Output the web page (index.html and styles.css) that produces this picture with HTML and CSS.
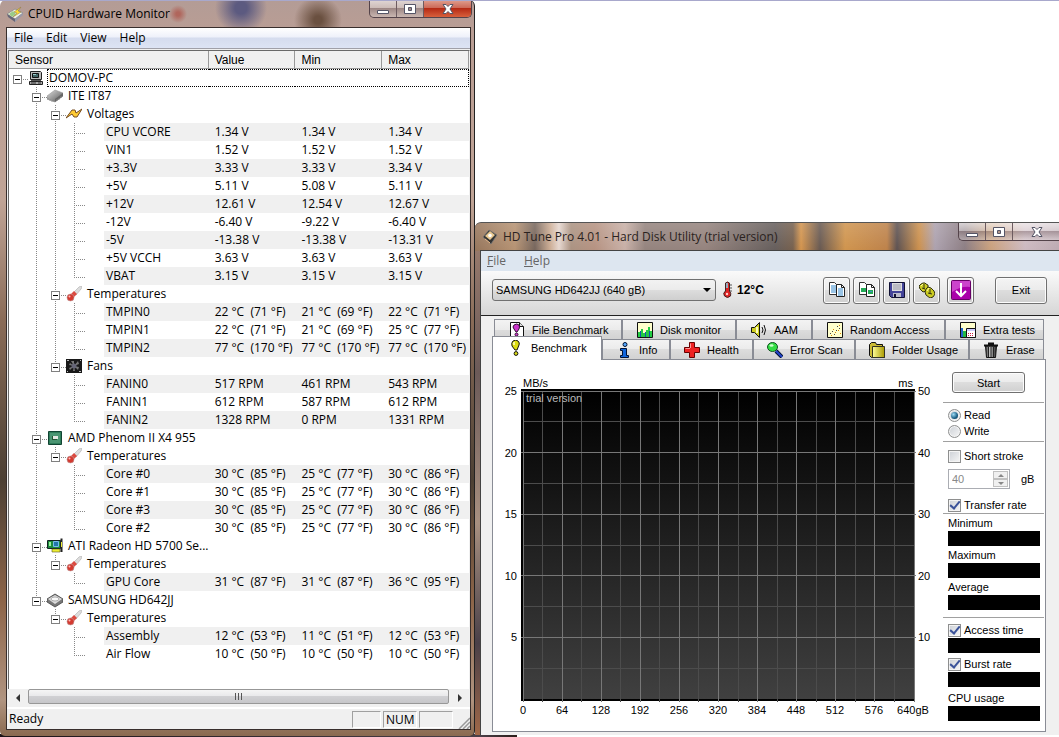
FILE: index.html
```
<!DOCTYPE html>
<html lang="en">
<head>
  <meta charset="UTF-8" />
  <meta name="viewport" content="width=device-width, initial-scale=1.0"/>
  <title>Hardware Monitor</title>
  <link rel="stylesheet" href="styles.css">
</head>
<body>
  <svg class="defs" aria-hidden="true">
    <linearGradient id="chipFill" x2="1" y2="1"><stop stop-color="#ddd"/><stop offset="1" stop-color="#555"/></linearGradient>
    <linearGradient id="yellowFill" x2="1"><stop stop-color="#ff9"/><stop offset="1" stop-color="#a90"/></linearGradient>
    <linearGradient id="binFill" x2="1"><stop stop-color="#333"/><stop offset=".4" stop-color="#ccc"/><stop offset="1" stop-color="#222"/></linearGradient>

    <symbol id="i-cpuid" viewBox="0 0 16 16">
      <path d="M0 8l8-5 8 4-8 6z" fill="#eef0e6" stroke="#888" stroke-width=".8"/>
      <path d="M0 8l8 5v3L1 11z" fill="#667"/>
      <path d="M8 13l8-6v2l-8 7z" fill="#99a"/>
      <path d="M2 8l4-3 3 3-4 3z" fill="#9c8"/>
      <path d="M14 1L7 6l3 1-4 4 8-5-3-1z" fill="#fd3" stroke="#874" stroke-width=".5"/>
    </symbol>
    <symbol id="i-pc" viewBox="0 0 16 16">
      <path d="M2.500 1.500h10l1 1v7h-11z" fill="#bbb" stroke="#222"/>
      <path d="M4.500 3.500h6v4h-6z" fill="#466" stroke="#111"/>
      <path d="M5 4h3v1H5z" fill="#9cc"/>
      <path d="M3 10h10v2H3z" fill="#555"/>
      <path d="M1.500 11.500h13v3h-13z" fill="#aaa" stroke="#222"/>
      <path d="M3 13h5M10 13h3" stroke="#333"/>
    </symbol>
    <symbol id="i-chip" viewBox="0 0 16 16">
      <path d="M0 8l8-6 8 3v3l-8 6-8-3z" fill="url(#chipFill)" stroke="#999" stroke-width=".6"/>
      <path d="M8 11l8-6v3l-8 6z" fill="#666"/>
      <path d="M1 10v2M3 11v2M5 12v2M7 12v2M10 11v2M12 10v2M14 8v2" stroke="#888" stroke-width=".8"/>
    </symbol>
    <symbol id="i-volt" viewBox="0 0 16 16">
      <path d="M0 12L6 4h3l1 3 6-4-5 8H8L6 8z" fill="#fc3" stroke="#754a20" stroke-width="1"/>
    </symbol>
    <symbol id="i-temp" viewBox="0 0 16 16">
      <path d="M7 7l6-6 2-1 1 1-1 2-5 6z" fill="#ddd" stroke="#bbb" stroke-width=".8"/>
      <path d="M4 9l4-4 3 3-4 4z" fill="#dc4a40"/>
      <circle cx="4.500" cy="11.500" r="3.500" fill="#d43a30" stroke="#b99" stroke-width=".6"/>
      <circle cx="3.500" cy="10.500" r="1" fill="#fbb"/>
    </symbol>
    <symbol id="i-fan" viewBox="0 0 16 16">
      <path d="M0 1h16v14H0z" fill="#181818"/>
      <path d="M8 8L5 3h3zM8 8l4-5 1 3zM8 8l5 1-1 3zM8 8l1 5H7zM8 8l-4 4-1-2zM8 8L3 7l1-2z" fill="#777"/>
      <circle cx="8" cy="8" r="2.500" fill="#667"/>
      <path d="M1 2h2v1H1zM14 2h1v1h-1zM1 13h1v1H1zM13 13h2v1h-2z" fill="#bbb"/>
    </symbol>
    <symbol id="i-cpu" viewBox="0 0 16 16">
      <path d="M1.500 1.500h13v13h-13z" fill="#2e7d5a" stroke="#143"/>
      <path d="M3 3h10v10H3z" fill="#4a9572"/>
      <path d="M5 6h5v4H5z" fill="#253"/>
      <path d="M6 6h5v3H6z" fill="#e4e8e4"/>
    </symbol>
    <symbol id="i-gpu" viewBox="0 0 16 16">
      <path d="M.500 2.500h13v8H.500z" fill="#1c8a3c" stroke="#122"/>
      <path d="M2 4h2v4H2z" fill="#9e9"/>
      <path d="M6.500 3.500h5v5h-5z" fill="#27a" stroke="#7be"/>
      <path d="M5 11h8v3H5z" fill="#ee3" stroke="#552" stroke-width=".6"/>
      <path d="M13.500 1.500h2M14.500 1v13" stroke="#222" stroke-width="2"/>
      <path d="M14.500 4v5" stroke="#ee3"/>
    </symbol>
    <symbol id="i-disk" viewBox="0 0 16 16">
      <path d="M0 7l8-5 8 5v3l-8 5-8-5z" fill="#777" stroke="#444" stroke-width=".8"/>
      <path d="M1 7l7-4 7 4-7 5z" fill="#ddd"/>
      <ellipse cx="8" cy="7" rx="4" ry="2" fill="#f8f8f8" stroke="#999" stroke-width=".8"/>
    </symbol>
    <symbol id="i-hdtune" viewBox="0 0 16 16">
      <path d="M1 8l6-7 8 5-6 9z" fill="#333" stroke="#777" stroke-width=".8"/>
      <path d="M3 7l5-5 5 4-5 5z" fill="#e8c890"/>
      <circle cx="8" cy="6.500" r="1.800" fill="#fff"/>
      <path d="M3 10l5 4" stroke="#eb8"/>
    </symbol>
    <symbol id="i-thermo" viewBox="0 0 12 18">
      <path d="M3.500 2q2-2 4 0v8q2 2 1 5-3 3-6 0-2-3 1-5z" fill="#d22" stroke="#422"/>
      <path d="M4 2h2v5H4z" fill="#9ab"/>
      <circle cx="5" cy="13" r="1.200" fill="#fcc"/>
      <path d="M8 4h2M8 7h2M8 10h2" stroke="#555"/>
    </symbol>
    <symbol id="i-bang" viewBox="0 0 16 16">
      <path d="M5 1q3-2 5 0 2 2 1 4L9 10H7L4 6Q3 3 5 1z" fill="#dd1" stroke="#111"/>
      <circle cx="8" cy="13.500" r="1.900" fill="#dd1" stroke="#111"/>
      <path d="M6 2v3" stroke="#ffc" stroke-width="1.500"/>
    </symbol>
    <symbol id="i-filebang" viewBox="0 0 16 16">
      <path d="M1.500.500h9l4 4v11h-13z" fill="#fff" stroke="#111"/>
      <path d="M10.500.500v4h4" fill="#ddd" stroke="#111"/>
      <path d="M5 3q3-2 5 0 1 2 0 4L8 10H7L5 7Q3 5 5 3z" fill="#c3c" stroke="#313"/>
      <circle cx="7.500" cy="12.500" r="1.500" fill="#c3c" stroke="#313"/>
    </symbol>
    <symbol id="i-monitor" viewBox="0 0 16 16">
      <path d="M.500.500h15v15H.500z" fill="#ffc" stroke="#111"/>
      <path d="M1 10h3V7h2v4h3V8h2V5h2v4h2v6H1z" fill="#2c4"/>
      <path d="M3 9h1v6H3zM8 10h1v5H8zM12 9h1v6h-1z" fill="#15a"/>
    </symbol>
    <symbol id="i-sound" viewBox="0 0 16 16">
      <path d="M.500 5.500h3l5-5v15l-5-5h-3z" fill="#cc2" stroke="#111"/>
      <path d="M6 5v6" stroke="#ffb" stroke-width="2"/>
      <path d="M11 5q2 3 0 6M13 3q3 5 0 10" fill="none" stroke="#111"/>
    </symbol>
    <symbol id="i-random" viewBox="0 0 16 16">
      <path d="M.500.500h15v15H.500z" fill="#ffc" stroke="#111"/>
      <path d="M3 11h1v1H3zM5 9h1v1H5zM7 12h1v1H7zM9 8h1v1H9zM10 4h1v1h-1zM12 6h1v1h-1z" fill="#444"/>
      <path d="M4 13h1v1H4zM6 7h1v1H6zM8 10h1v1H8zM11 8h1v1h-1zM13 11h1v1h-1zM12 3h1v1h-1z" fill="#d80"/>
    </symbol>
    <symbol id="i-extra" viewBox="0 0 16 16">
      <path d="M.500.500h15v15H.500z" fill="#ffc" stroke="#111"/>
      <path d="M1 6h2v9H1z" fill="#26c"/><path d="M3 9h3v6H3z" fill="#2b4"/>
      <path d="M6.500 6.500h9v9h-9z" fill="#fff" stroke="#111"/>
      <path d="M7 7h8v2H7z" fill="#ccf"/>
      <path d="M8 11h1v1H8zM10 11h1v1h-1zM12 11h1v1h-1zM8 13h1v1H8zM10 13h1v1h-1zM12 13h1v1h-1z" fill="#c24"/>
    </symbol>
    <symbol id="i-info" viewBox="0 0 16 16">
      <circle cx="9" cy="2.500" r="2" fill="#5af" stroke="#013"/>
      <path d="M4.500 6.500h6v7h2v2h-8v-2h2v-5h-2z" fill="#16d" stroke="#013"/>
    </symbol>
    <symbol id="i-health" viewBox="0 0 16 16">
      <path d="M5.500.500h5v5h5v5h-5v5h-5v-5h-5v-5h5z" fill="#e22" stroke="#600"/>
      <path d="M6.500 6V1.500M1.500 6.500H6" stroke="#f99"/>
    </symbol>
    <symbol id="i-scan" viewBox="0 0 16 16">
      <path d="M9 9l6 6" stroke="#013" stroke-width="4"/><path d="M9 9l6 6" stroke="#24c" stroke-width="2"/>
      <ellipse cx="5.500" cy="5" rx="5" ry="4.500" fill="#3d4" stroke="#152"/>
      <ellipse cx="4.500" cy="3.500" rx="2" ry="1.200" fill="#cfc"/>
    </symbol>
    <symbol id="i-folder" viewBox="0 0 16 16">
      <path d="M.500 2.500l2-2h4l1 2h6v3h2v10h-13l-2-2z" fill="#cb3" stroke="#111"/>
      <path d="M3.500 4.500h12v11h-12z" fill="url(#yellowFill)" stroke="#332"/>
    </symbol>
    <symbol id="i-bin" viewBox="0 0 16 16">
      <path d="M2.500 4h11l-1 11.500h-9z" fill="url(#binFill)" stroke="#111"/>
      <path d="M1 3.500h14M5 1.500h6" stroke="#111" stroke-width="2"/>
      <path d="M5.500 5v10M8 5v10M10.500 5v10" stroke="#222"/>
    </symbol>
    <symbol id="i-copy" viewBox="0 0 16 16">
      <path d="M.500.500h5l3 3v9h-8z" fill="#fff" stroke="#333"/>
      <path d="M2 4h5M2 6h5M2 8h5M2 10h5" stroke="#38c"/>
      <path d="M7.500 2.500h5l3 3v9h-8z" fill="#fff" stroke="#222"/>
      <path d="M12.500 2.500v3h3" fill="none" stroke="#222"/>
      <path d="M9 7h5M9 9h5M9 11h5M9 13h5" stroke="#38c"/>
    </symbol>
    <symbol id="i-copyimg" viewBox="0 0 16 16">
      <path d="M.500.500h5l3 3v9h-8z" fill="#fff" stroke="#333"/><path d="M2 6h5v4H2z" fill="#2a5"/>
      <path d="M7.500 2.500h5l3 3v9h-8z" fill="#fff" stroke="#222"/>
      <path d="M12.500 2.500v3h3" fill="none" stroke="#222"/>
      <path d="M9 8h5v4H9z" fill="#2a5"/><path d="M11 9h2v1h-2z" fill="#48c"/>
    </symbol>
    <symbol id="i-save" viewBox="0 0 16 16">
      <path d="M.500.500h15v15h-13l-2-2z" fill="#449" stroke="#113"/>
      <path d="M3 1h10v8H3z" fill="#ddd"/><path d="M4 3h8M4 5h8M4 7h8" stroke="#99a"/>
      <path d="M4 11h8v4H4z" fill="#bbc"/><path d="M5 12h2v3H5z" fill="#113"/>
    </symbol>
    <symbol id="i-options" viewBox="0 0 16 16">
      <g fill="#cc2" stroke="#331">
        <path d="M4 1h2l1 1 2 1v3L7 9l-3 1-3-3-1-3 2-2z"/>
        <path d="M9 5l3 1 3 3 1 3-2 3-3 1-4-3-1-3 1-3z"/>
      </g>
      <path d="M5 2v5M3 6l3 1M11 7v5M9 11l4 1" stroke="#331"/>
      <path d="M2 4l2-2M8 9l2-3" stroke="#ff9"/>
    </symbol>
    <symbol id="i-down" viewBox="0 0 20 20">
      <rect x=".500" y=".500" width="19" height="19" rx="1" fill="#a0a" stroke="#606"/>
      <path d="M1 1h18v6Q10 6 1 12z" fill="#c4c"/>
      <path d="M10 3v13M5 11l5 5 5-5" fill="none" stroke="#fff" stroke-width="2"/>
    </symbol>
    <symbol id="w-min" viewBox="0 0 14 12"><path d="M1.500 7.500h11v3h-11z" fill="#fff" stroke="#556"/></symbol>
    <symbol id="w-max" viewBox="0 0 14 12"><path d="M1.500 1.500h11v9h-11zM5.500 4.500h3v3h-3z" fill="#fff" stroke="#556" fill-rule="evenodd"/></symbol>
    <symbol id="w-close" viewBox="0 0 14 12"><path d="M2 1.500h3l2 2 2-2h3L9 6l3 4.500H9l-2-2-2 2H2L5 6z" fill="#fff" stroke="#556"/></symbol>
  </svg>

  <main class="desktop">
    <section class="window monitor">
      <header class="titlebar">
        <svg class="icon"><use href="#i-cpuid"/></svg>
        <h1>CPUID Hardware Monitor</h1>
        <div class="caption">
          <button aria-label="Minimize"><svg><use href="#w-min"/></svg></button>
          <button aria-label="Maximize"><svg><use href="#w-max"/></svg></button>
          <button class="close" aria-label="Close"><svg><use href="#w-close"/></svg></button>
        </div>
      </header>
      <div class="client">
        <nav class="menu">
          <button>File</button><button>Edit</button><button>View</button><button>Help</button>
        </nav>
        <div class="list">
          <table class="sensors">
            <colgroup><col class="name-col"><col><col><col></colgroup>
            <thead><tr><th>Sensor</th><th>Value</th><th>Min</th><th>Max</th></tr></thead>
            <tbody id="sensorRows"></tbody>
          </table>
        </div>
        <div class="scrollbar">
          <button class="arrow left" aria-label="Scroll left"></button>
          <div class="thumb"><i></i><i></i><i></i></div>
          <button class="arrow right" aria-label="Scroll right"></button>
        </div>
        <footer class="status">
          <span class="ready">Ready</span>
          <span class="pane"></span><span class="pane wide">NUM</span><span class="pane wide"></span>
          <svg class="grip" viewBox="0 0 12 12"><path d="M1 12L12 1M5 12l7-7M9 12l3-3" stroke="#999" stroke-width="1.500"/></svg>
        </footer>
      </div>
    </section>

    <section class="window tune">
      <header class="titlebar">
        <svg class="icon"><use href="#i-hdtune"/></svg>
        <h1>HD Tune Pro 4.01 - Hard Disk Utility (trial version)</h1>
        <div class="caption">
          <button aria-label="Minimize"><svg><use href="#w-min"/></svg></button>
          <button aria-label="Maximize"><svg><use href="#w-max"/></svg></button>
          <button class="close" aria-label="Close"><svg><use href="#w-close"/></svg></button>
        </div>
      </header>
      <div class="client">
        <nav class="menu">
          <button><u>F</u>ile</button><button><u>H</u>elp</button>
        </nav>
        <div class="toolbar">
          <select aria-label="Drive"><option>SAMSUNG HD642JJ (640 gB)</option></select>
          <svg class="thermo"><use href="#i-thermo"/></svg>
          <strong>12°C</strong>
          <div class="tools">
            <button class="push" aria-label="Copy text"><svg class="icon"><use href="#i-copy"/></svg></button>
            <button class="push" aria-label="Copy image"><svg class="icon"><use href="#i-copyimg"/></svg></button>
            <button class="push" aria-label="Save"><svg class="icon"><use href="#i-save"/></svg></button>
            <button class="push" aria-label="Options"><svg class="icon"><use href="#i-options"/></svg></button>
            <button class="push down" aria-label="Minimize to tray"><svg class="icon big"><use href="#i-down"/></svg></button>
          </div>
          <button class="push exit">Exit</button>
        </div>
        <div class="body">
          <div class="tabs back">
            <button><svg class="icon"><use href="#i-filebang"/></svg>File Benchmark</button>
            <button><svg class="icon"><use href="#i-monitor"/></svg>Disk monitor</button>
            <button><svg class="icon"><use href="#i-sound"/></svg>AAM</button>
            <button><svg class="icon"><use href="#i-random"/></svg>Random Access</button>
            <button><svg class="icon"><use href="#i-extra"/></svg>Extra tests</button>
          </div>
          <div class="tabs front">
            <button class="active"><svg class="icon"><use href="#i-bang"/></svg>Benchmark</button>
            <button><svg class="icon"><use href="#i-info"/></svg>Info</button>
            <button><svg class="icon"><use href="#i-health"/></svg>Health</button>
            <button><svg class="icon"><use href="#i-scan"/></svg>Error Scan</button>
            <button><svg class="icon"><use href="#i-folder"/></svg>Folder Usage</button>
            <button><svg class="icon"><use href="#i-bin"/></svg>Erase</button>
          </div>
          <div class="page">
            <div class="chart">
              <div class="units"><span>MB/s</span><span>ms</span></div>
              <div class="axis-y left"><span>25</span><span>20</span><span>15</span><span>10</span><span>5</span><span></span></div>
              <div class="plot">
                <svg viewBox="0 0 20 10" preserveAspectRatio="none">
                  <path class="minor" d="M1 0V10.100M3 0V10.100M5 0V10.100M7 0V10.100M9 0V10.100M11 0V10.100M13 0V10.100M15 0V10.100M17 0V10.100M19 0V10.100M0 1H20M0 3H20M0 5H20M0 7H20M0 9H20"/>
                  <path class="major" d="M0 0V10.100M2 0V10.100M4 0V10.100M6 0V10.100M8 0V10.100M10 0V10.100M12 0V10.100M14 0V10.100M16 0V10.100M18 0V10.100M20 0V10.100M-.100 0H20.100M-.100 2H20.100M-.100 4H20.100M-.100 6H20.100M-.100 8H20.100"/>
                </svg>
                <span class="trial">trial version</span>
              </div>
              <div class="axis-y right"><span>50</span><span>40</span><span>30</span><span>20</span><span>10</span><span></span></div>
              <div class="axis-x"><span>0</span><span>64</span><span>128</span><span>192</span><span>256</span><span>320</span><span>384</span><span>448</span><span>512</span><span>576</span><span>640gB</span></div>
            </div>
            <form class="side">
              <div class="group start"><button type="button" class="push">Start</button></div>
              <div class="group mode">
                <label><input type="radio" name="mode" checked>Read</label>
                <label><input type="radio" name="mode">Write</label>
              </div>
              <div class="group stroke">
                <label><input type="checkbox">Short stroke</label>
                <div class="size">
                  <div class="spinner">
                    <input type="text" value="40" id="strokeSize" disabled>
                    <div class="steps"><button type="button" aria-label="Up" disabled></button><button type="button" class="dn" aria-label="Down" disabled></button></div>
                  </div>
                  <label for="strokeSize">gB</label>
                </div>
                <label><input type="checkbox" checked>Transfer rate</label>
              </div>
              <div class="group stats">
                <p>Minimum</p><output></output>
                <p>Maximum</p><output></output>
                <p>Average</p><output></output>
              </div>
              <div class="group stats last">
                <label><input type="checkbox" checked>Access time</label><output></output>
                <label><input type="checkbox" checked>Burst rate</label><output></output>
                <p>CPU usage</p><output></output>
              </div>
            </form>
          </div>
        </div>
      </div>
    </section>
  </main>

  <script>
    const v = (name, value, min, max) => ({ name, values: [value, min, max] });

    const tree = { name: "DOMOV-PC", icon: "pc", children: [
      { name: "ITE IT87", icon: "chip", children: [
        { name: "Voltages", icon: "volt", children: [
          v("CPU VCORE", "1.34 V", "1.34 V", "1.34 V"),
          v("VIN1", "1.52 V", "1.52 V", "1.52 V"),
          v("+3.3V", "3.33 V", "3.33 V", "3.34 V"),
          v("+5V", "5.11 V", "5.08 V", "5.11 V"),
          v("+12V", "12.61 V", "12.54 V", "12.67 V"),
          v("-12V", "-6.40 V", "-9.22 V", "-6.40 V"),
          v("-5V", "-13.38 V", "-13.38 V", "-13.31 V"),
          v("+5V VCCH", "3.63 V", "3.63 V", "3.63 V"),
          v("VBAT", "3.15 V", "3.15 V", "3.15 V")
        ] },
        { name: "Temperatures", icon: "temp", children: [
          v("TMPIN0", "22 °C  (71 °F)", "21 °C  (69 °F)", "22 °C  (71 °F)"),
          v("TMPIN1", "22 °C  (71 °F)", "21 °C  (69 °F)", "25 °C  (77 °F)"),
          v("TMPIN2", "77 °C  (170 °F)", "77 °C  (170 °F)", "77 °C  (170 °F)")
        ] },
        { name: "Fans", icon: "fan", children: [
          v("FANIN0", "517 RPM", "461 RPM", "543 RPM"),
          v("FANIN1", "612 RPM", "587 RPM", "612 RPM"),
          v("FANIN2", "1328 RPM", "0 RPM", "1331 RPM")
        ] }
      ] },
      { name: "AMD Phenom II X4 955", icon: "cpu", children: [
        { name: "Temperatures", icon: "temp", children: [
          v("Core #0", "30 °C  (85 °F)", "25 °C  (77 °F)", "30 °C  (86 °F)"),
          v("Core #1", "30 °C  (85 °F)", "25 °C  (77 °F)", "30 °C  (86 °F)"),
          v("Core #3", "30 °C  (85 °F)", "25 °C  (77 °F)", "30 °C  (86 °F)"),
          v("Core #2", "30 °C  (85 °F)", "25 °C  (77 °F)", "30 °C  (86 °F)")
        ] }
      ] },
      { name: "ATI Radeon HD 5700 Se...", icon: "gpu", children: [
        { name: "Temperatures", icon: "temp", children: [
          v("GPU Core", "31 °C  (87 °F)", "31 °C  (87 °F)", "36 °C  (95 °F)")
        ] }
      ] },
      { name: "SAMSUNG HD642JJ", icon: "disk", children: [
        { name: "Temperatures", icon: "temp", children: [
          v("Assembly", "12 °C  (53 °F)", "11 °C  (51 °F)", "12 °C  (53 °F)"),
          v("Air Flow", "10 °C  (50 °F)", "10 °C  (50 °F)", "10 °C  (50 °F)")
        ] }
      ] }
    ] };

    const rows = [];

    // guides holds one class per indent level: pipe or empty
    function addRow(node, guides, isLast, index) {
      const root = guides.length === 0;
      const join = root ? "root" : isLast ? "corner" : "tee";
      const cls = root ? "focused" : node.values && index % 2 === 0 ? "striped" : "";
      const toggle = node.children ? "<button class='toggle' aria-label='Collapse'></button>" : "";
      const icon = node.icon ? `<svg class="icon"><use href="#i-${node.icon}"/></svg>` : "<span class='icon'></span>";
      const cells = (node.values || ["", "", ""]).map(t => `<td>${t}</td>`).join("");
      const lines = guides.map(g => `<span class="guide ${g}"></span>`).join("");
      rows.push(`<tr class="${cls}"><td class="name"><div class="node">${lines}<span class="guide ${join}">${toggle}</span>${icon}<span class="text">${node.name}</span></div></td>${cells}</tr>`);
      (node.children || []).forEach((child, i, all) => {
        addRow(child, guides.concat(isLast ? "empty" : "pipe"), i === all.length - 1, i);
      });
    }

    addRow(tree, [], true, 0);
    document.getElementById("sensorRows").innerHTML = rows.join("");
  </script>
</body>
</html>
```
FILE: styles.css
```
* {
  box-sizing: border-box;
}

body {
  margin: 0;
  background: #fff;
  color: #000;
  font-family: "Liberation Sans", Arial, sans-serif;
  font-size: 11px;
}

button, input, select {
  font: inherit;
  color: inherit;
  margin: 0;
  padding: 0;
}

h1, p {
  margin: 0;
}

.defs {
  position: absolute;
  width: 0;
  height: 0;
}

.desktop {
  display: grid;
  grid-template-columns: 475fr 584fr;
  min-height: 100vh;
  padding-bottom: 1px;
  overflow: hidden;
  border-top: 1px solid #a8a8cc;
  background: linear-gradient(90deg, #1c1418, #4a4048 480px, #2a1c18 517px, transparent 517px) bottom / 100% 3px no-repeat;
}

.icon {
  width: 16px;
  height: 16px;
  flex: none;
}

.window {
  display: flex;
  flex-direction: column;
  min-width: 0;
}

.titlebar {
  display: flex;
  align-items: center;
  gap: 5px;
  padding-left: 7px;
}

.titlebar h1 {
  flex: 1;
  font: 12px/16px "Open Sans", "Segoe UI", sans-serif;
  white-space: nowrap;
}

.caption {
  display: flex;
  align-self: flex-start;
  border: 1px solid #54434a;
  border-top: 0;
  border-radius: 0 0 5px 5px;
  overflow: hidden;
}

.caption button {
  display: flex;
  align-items: center;
  justify-content: center;
  width: 27px;
  height: 17px;
  border: 0;
  border-right: 1px solid #6d5b60;
  background: linear-gradient(#ffffff99, #ffffff55 45%, #7a686c66 50%, #ffffff44);
}

.caption svg {
  width: 14px;
  height: 12px;
}

.caption .close {
  width: 47px;
  border-right: 0;
}

.client {
  display: flex;
  flex-direction: column;
  flex: 1;
  background: #f0f0f0;
}

.menu {
  display: flex;
  align-items: center;
  font: 12px/16px "Open Sans", "Segoe UI", sans-serif;
}

.menu button {
  border: 0;
  background: none;
}

/* hardware monitor */

.monitor {
  margin-top: -1px;
  padding: 0 3px 6px 6px;
  border-right: 1px solid #222;
  border-radius: 6px 6px 5px 5px;
  background:
    radial-gradient(circle at 241px 8px, #5c5a80 6px, transparent 26px),
    radial-gradient(circle at 318px 20px, #6a5040 4px, transparent 24px),
    radial-gradient(circle at 178px 14px, #b0665c 2px, transparent 9px),
    linear-gradient(#b39c96, #b99d94 30px, #c0a496 200px, #8a6c58 320px, #4c4034 480px, #8c6448 600px, #b09480 700px, #8a6a50);
}

.monitor .titlebar {
  height: 27px;
  margin-left: -6px;
}

.monitor .caption {
  margin-right: -1px;
}

.monitor .close {
  background: linear-gradient(#e0a090, #cd6a58 45%, #b52a14 50%, #d8603c);
}

.monitor .client {
  border: 1px solid #382e2c;
}

.monitor .menu {
  height: 21px;
  gap: 13px;
  padding-left: 7px;
  background: linear-gradient(#fff, #eef1fa 45%, #d5dcee 50%, #dde4f4);
  border-bottom: 1px solid #a0a0a8;
}

.list {
  flex: 1;
  margin: 1px 0 0 1px;
  border: 1px solid #696969;
  border-bottom: 0;
  border-right-color: #f0f0f0;
  background: #fff;
}

.sensors {
  width: 100%;
  table-layout: fixed;
  border-collapse: separate;
  border-spacing: 0;
}

.name-col {
  width: 43.4%;
}

.sensors th {
  height: 18px;
  padding: 0 6px;
  background: #f0f0f0;
  border-right: 1px solid #999;
  border-bottom: 1px solid #999;
  font-size: 12px;
  font-weight: normal;
  text-align: left;
}

.sensors td {
  height: 18px;
  padding: 0 0 0 6px;
  font: 12px/16px "Open Sans", "Segoe UI", sans-serif;
  white-space: pre;
}

.sensors .name {
  padding: 0;
}

.node {
  display: flex;
  align-items: center;
  height: 18px;
}

.text {
  flex: 1;
  align-self: stretch;
  min-width: 0;
  margin-left: 3px;
  padding: 0 2px;
  line-height: 18px;
}

.striped td:not(.name), .striped .text {
  background: #f0f0f0;
}

.focused td:not(.name) {
  border-top: 1px dotted #000;
  border-bottom: 1px dotted #000;
}

.focused td:last-child {
  border-right: 1px dotted #000;
}

.focused .text {
  border: 1px dotted #000;
  border-right: 0;
  line-height: 16px;
  padding-left: 1px;
}

.guide {
  display: flex;
  flex: none;
  align-items: center;
  width: 19px;
  height: 18px;
  padding-left: 4px;
  background-repeat: no-repeat;
}

.pipe {
  background-image: repeating-linear-gradient(#888 0 1px, transparent 1px 2px);
  background-size: 1px 18px;
  background-position: 8px 0;
}

.tee {
  background-image: repeating-linear-gradient(#888 0 1px, transparent 1px 2px), repeating-linear-gradient(90deg, #888 0 1px, transparent 1px 2px);
  background-size: 1px 18px, 11px 1px;
  background-position: 8px 0, 8px 10px;
}

.corner {
  background-image: repeating-linear-gradient(#888 0 1px, transparent 1px 2px), repeating-linear-gradient(90deg, #888 0 1px, transparent 1px 2px);
  background-size: 1px 10px, 11px 1px;
  background-position: 8px 0, 8px 10px;
}

.root {
  background-image: repeating-linear-gradient(90deg, #888 0 1px, transparent 1px 2px);
  background-size: 11px 1px;
  background-position: 8px 10px;
}

.toggle {
  width: 9px;
  height: 9px;
  margin-top: 3px;
  border: 1px solid #808080;
  background: linear-gradient(#000, #000) center / 5px 1px no-repeat #fff;
}

.scrollbar {
  display: flex;
  gap: 2px;
  height: 18px;
  padding: 0 2px;
}

.arrow {
  display: flex;
  align-items: center;
  justify-content: center;
  width: 17px;
  border: 0;
  background: none;
}

.arrow::before {
  content: "";
  border: 4px solid transparent;
}

.arrow.left::before {
  border-right-color: #333;
  border-left-width: 0;
}

.arrow.right::before {
  border-left-color: #333;
  border-right-width: 0;
}

.thumb {
  display: flex;
  flex: 1;
  align-items: center;
  justify-content: center;
  gap: 2px;
  height: 15px;
  border: 1px solid #979797;
  border-radius: 2px;
  background: linear-gradient(#f5f5f5, #e9e9eb 45%, #d0d0d3 50%, #c6c6c9);
}

.thumb i {
  width: 1px;
  height: 7px;
  background: #555;
}

.status {
  display: flex;
  align-items: center;
  gap: 2px;
  height: 22px;
  border-top: 2px solid #fff;
  font: 12px/16px "Open Sans", "Segoe UI", sans-serif;
}

.ready {
  flex: 1;
  padding-left: 2px;
}

.pane {
  width: 29px;
  height: 17px;
  padding-left: 2px;
  border: 1px solid #a0a0a0;
  border-right-color: #fff;
  border-bottom-color: #fff;
  line-height: 15px;
}

.pane.wide {
  width: 34px;
}

.grip {
  align-self: flex-end;
  width: 12px;
  height: 12px;
  margin-left: 3px;
}

/* disk utility */

.tune {
  margin-top: 221px;
  align-self: start;
  padding-left: 5px;
  border-top: 1px solid #555;
  border-top-left-radius: 6px;
  background:
    linear-gradient(#ffffff33, #ffffff11) top / 100% 28px no-repeat,
    linear-gradient(90deg, #8f6c50, #b08a68 40px, #6c5a50 60px, #c8a68c 75px, #e4d4cc 84px, #a48a78 96px, #b08a78 120px, #c4aaa0 150px, #8c7a74 170px, #8d7a74 230px, #5a5250 300px, #6c5440 318px, #d08c40 326px, #5c4c44 345px, #cc8c40 370px, #b8783c 412px, #504444 422px, #c88840 444px, #a69aa8 460px, #84747a 490px, #c69a74 516px, #c9b4bc 550px, #b8a4ac) top / 100% 28px no-repeat,
    linear-gradient(#a08070, #6c5a58 150px, #a89080 300px, #4a4048 420px, #a06848);
}

.tune .titlebar {
  height: 27px;
  margin-left: -5px;
}

.tune .titlebar h1 {
  color: #2a2220;
}

.tune .close {
  width: 48px;
}

.tune .caption {
  border-radius: 0 0 0 5px;
  border-right: 0;
  margin-right: -2px;
}

.tune .client {
  border-left: 1px solid #444;
  border-top: 1px solid #444;
}

.tune .menu {
  height: 20px;
  gap: 18px;
  padding-left: 6px;
  background: #dde6f0;
  color: #666;
}

.toolbar {
  display: flex;
  align-items: center;
  height: 45px;
  padding: 0 12px 6px 11px;
  background: linear-gradient(#fafafa, #d6d6d6);
  border-bottom: 1px solid #222;
}

.toolbar select {
  flex: 0 1 224px;
  height: 22px;
  padding: 0 3px;
  appearance: none;
  border: 1px solid #707070;
  border-radius: 3px;
  background:
    url("data:image/svg+xml,%3Csvg xmlns='http://www.w3.org/2000/svg' width='8' height='4'%3E%3Cpath d='M0 0h8L4 4z'/%3E%3C/svg%3E") right 4px center no-repeat,
    linear-gradient(#f2f2f2, #ebebeb 50%, #ddd 50%, #cfcfcf);
}

.thermo {
  width: 12px;
  height: 18px;
  margin: 0 3px 0 6px;
}

.toolbar strong {
  font-size: 12px;
}

.tools {
  display: flex;
  gap: 3px;
  margin-left: auto;
}

.push {
  display: flex;
  align-items: center;
  justify-content: center;
  border: 1px solid #707070;
  border-radius: 3px;
  background: linear-gradient(#f4f4f4, #ebebeb 50%, #ddd 50%, #d0d0d0);
  box-shadow: inset 0 0 0 1px #fcfcfc;
}

.tools .push {
  width: 27px;
  height: 27px;
}

.tools .down {
  margin-left: 4px;
}

.icon.big {
  width: 20px;
  height: 20px;
}

.exit {
  width: 52px;
  height: 27px;
  margin-left: 21px;
}

.body {
  padding: 3px 13px 3px 11px;
}

.tabs {
  display: grid;
  margin: 0 2px;
}

.tabs button {
  display: flex;
  align-items: center;
  gap: 7px;
  height: 20px;
  padding-left: 14px;
  border: 1px solid #898c95;
  border-bottom: 0;
  background: linear-gradient(#f3f3f3, #ebebeb 50%, #ddd 50%, #d2d2d2);
  white-space: nowrap;
}

.tabs.back {
  grid-template-columns: 128fr 114fr 76fr 133fr 99fr;
}

.tabs.front {
  grid-template-columns: 110fr 68fr 83fr 102fr 114fr 75fr;
  margin-left: 0;
}

.tabs.front button {
  padding-left: 13px;
}

.tabs .active {
  z-index: 1;
  height: 24px;
  margin: -3px 0 -1px;
  padding-bottom: 2px;
  background: #fff;
}

.tabs.front .active {
  padding-left: 15px;
}

.page {
  display: flex;
  border: 1px solid #898c95;
  background: #fff;
}

.chart {
  display: grid;
  flex: 1;
  grid-template: 29px 1fr 30px / 28px 1fr 28px;
}

.units {
  grid-column: 2;
  display: flex;
  align-items: flex-end;
  justify-content: space-between;
  padding: 0 2px;
}

.axis-y {
  grid-row: 2;
  display: flex;
  flex-direction: column;
  justify-content: space-between;
  padding: 2px 0;
}

.axis-y span {
  height: 0;
  line-height: 0;
}

.axis-y.left {
  grid-column: 1;
  padding-right: 4px;
  text-align: right;
}

.axis-y.right {
  grid-column: 3;
  padding-left: 3px;
}

.plot {
  grid-area: 2 / 2;
  position: relative;
  border: 2px solid #000;
  border-right-width: 1px;
  background: linear-gradient(#000, #404040);
}

.plot svg {
  display: block;
  width: 100%;
  height: 100%;
  position: absolute;
  overflow: visible;
}

.plot path {
  fill: none;
  vector-effect: non-scaling-stroke;
  shape-rendering: crispEdges;
}

.minor {
  stroke: #4c4c4c;
}

.major {
  stroke: #777;
}

.trial {
  position: absolute;
  left: 3px;
  top: 1px;
  color: #bbb;
}

.axis-x {
  grid-area: 3 / 2;
  display: flex;
  justify-content: space-between;
  padding: 3px 2px 0;
}

.axis-x span {
  display: flex;
  justify-content: center;
  width: 0;
}

.side {
  flex: none;
  width: 102px;
}

.group {
  display: flex;
  flex-direction: column;
  margin-right: 1px;
  padding: 0 4px 0 5px;
  border-bottom: 1px solid #a0a0a0;
}

.group label {
  display: flex;
  align-items: center;
  gap: 3px;
  height: 16px;
  white-space: nowrap;
}

.start {
  padding: 12px 19px 9px 9px;
}

.start .push {
  height: 21px;
}

.mode {
  padding-top: 4px;
  padding-bottom: 2px;
}

.side input[type="checkbox"], .side input[type="radio"] {
  display: grid;
  place-items: center;
  flex: none;
  width: 13px;
  height: 13px;
  appearance: none;
  border: 1px solid #8e8f8f;
  background: linear-gradient(135deg, #ccd0d6, #f6f6f6);
  box-shadow: inset 0 0 0 1px #f4f4f4;
}

.side input[type="radio"] {
  border-radius: 50%;
}

.side input[type="radio"]:checked::after {
  content: "";
  width: 7px;
  height: 7px;
  border-radius: 50%;
  background: radial-gradient(circle at 35% 35%, #9fdcf5, #1a5f86 60%, #0c2f45);
}

.side input[type="checkbox"]:checked::after {
  content: "";
  width: 4px;
  height: 8px;
  margin-top: -2px;
  border: solid #3a5299;
  border-width: 0 2px 2px 0;
  transform: rotate(40deg);
}

.stroke {
  padding-top: 6px;
}

.size {
  display: flex;
  align-items: center;
  gap: 11px;
  margin: 5px 0 8px;
}

.spinner {
  display: flex;
  width: 62px;
  height: 20px;
  padding: 1px;
  border: 1px solid #abadb3;
}

.spinner input {
  flex: 1;
  min-width: 0;
  padding-left: 2px;
  border: 0;
  background: #fff;
  color: #888;
}

.steps {
  display: grid;
  width: 15px;
}

.steps button {
  display: flex;
  align-items: center;
  justify-content: center;
  border: 1px solid #c0c0c0;
  background: #f0f0f0;
}

.steps button::before {
  content: "";
  border: 3px solid transparent;
  border-top: 0;
  border-bottom-color: #888;
}

.steps .dn::before {
  border-top: 3px solid #888;
  border-bottom: 0;
}

.stats {
  padding-top: 1px;
  padding-bottom: 6px;
}

.stats p {
  line-height: 16px;
}

.stats output {
  height: 15px;
  margin-bottom: 1px;
  background: #000;
}

.stats.last {
  padding-top: 4px;
  padding-bottom: 7px;
  border-bottom: 0;
}

.stats.last output {
  margin-bottom: 3px;
}
```
